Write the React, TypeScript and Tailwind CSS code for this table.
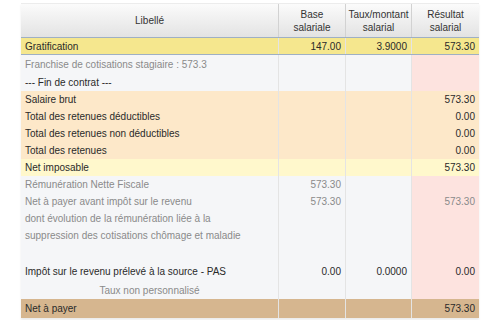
type Row = {
  label: string;
  base?: string;
  taux?: string;
  res?: string;
  kind: "grat" | "gray" | "orange" | "netimp" | "net";
  dark?: boolean;
  center?: boolean;
  h?: string;
};

const rows: Row[] = [
  { label: "Gratification", base: "147.00", taux: "3.9000", res: "573.30", kind: "grat", dark: true },
  { label: "Franchise de cotisations stagiaire : 573.3", kind: "gray", h: "h-[18px]" },
  { label: "--- Fin de contrat ---", kind: "gray", dark: true, h: "h-[18px]" },
  { label: "Salaire brut", res: "573.30", kind: "orange", dark: true },
  { label: "Total des retenues déductibles", res: "0.00", kind: "orange", dark: true },
  { label: "Total des retenues non déductibles", res: "0.00", kind: "orange", dark: true },
  { label: "Total des retenues", res: "0.00", kind: "orange", dark: true },
  { label: "Net imposable", res: "573.30", kind: "netimp", dark: true },
  { label: "Rémunération Nette Fiscale", base: "573.30", kind: "gray" },
  { label: "Net à payer avant impôt sur le revenu", base: "573.30", res: "573.30", kind: "gray" },
  { label: "dont évolution de la rémunération liée à la", kind: "gray" },
  { label: "suppression des cotisations chômage et maladie", kind: "gray" },
  { label: "", kind: "gray" },
  { label: "Impôt sur le revenu prélevé à la source - PAS", base: "0.00", taux: "0.0000", res: "0.00", kind: "gray", dark: true, h: "h-[21px]" },
  { label: "Taux non personnalisé", kind: "gray", center: true, h: "h-[17px]" },
  { label: "Net à payer", res: "573.30", kind: "net", dark: true, h: "h-[19px]" },
];

const bg = {
  grat: ["bg-[#f5e78e]", "bg-[#f5e78e]"],
  gray: ["bg-[#f5f6f8]", "bg-[#fde3df]"],
  orange: ["bg-[#fde8c9]", "bg-[#fde8c9]"],
  netimp: ["bg-[#fff8cc]", "bg-[#fff8cc]"],
  net: ["bg-[#d6b68f]", "bg-[#d6b68f]"],
};

function Cell({ children, cls, right }: { children?: React.ReactNode; cls: string; right?: boolean }) {
  return (
    <div className={`flex items-center px-[4px] border-r border-[#e4e4e4] last:border-r-0 ${right ? "justify-end" : ""} ${cls}`}>
      {children}
    </div>
  );
}

export default function App() {
  return (
    <div className="w-[500px] h-[320px] bg-white pt-[3px] overflow-hidden font-['Liberation_Sans',sans-serif] text-[10px]">
      <div className="w-[458px] ml-[21px] shadow-[0_2px_2px_rgba(0,0,0,0.08)]">
        <div className="grid grid-cols-[258px_67px_66px_67px] h-[35px] bg-gradient-to-b from-[#fbfbfb] to-[#e3e3e3] border-t border-t-[#ececec] border-b border-[#9fb0c4] text-[#333] text-center leading-[13px]">
          <div className="flex items-center justify-center border-r border-[#d2d2d2]">Libellé</div>
          <div className="flex items-center justify-center border-r border-[#d2d2d2]">Base<br />salariale</div>
          <div className="flex items-center justify-center border-r border-[#d2d2d2]">Taux/montant<br />salarial</div>
          <div className="flex items-center justify-center">Résultat<br />salarial</div>
        </div>
        {rows.map((r, i) => {
          const [main, last] = bg[r.kind];
          const color = r.dark ? "text-[#2a2a2a]" : "text-[#8a8a8a]";
          return (
            <div
              key={i}
              className={`grid grid-cols-[258px_67px_66px_67px] ${r.h ?? "h-[17px]"} ${color} ${r.kind === "grat" ? "border-b border-[#9fb0c4]" : ""}`}
            >
              <Cell cls={`${main} ${r.center ? "justify-center" : ""}`}>{r.label}</Cell>
              <Cell cls={main} right>{r.base}</Cell>
              <Cell cls={main} right>{r.taux}</Cell>
              <Cell cls={last} right>{r.res}</Cell>
            </div>
          );
        })}
      </div>
    </div>
  );
}
